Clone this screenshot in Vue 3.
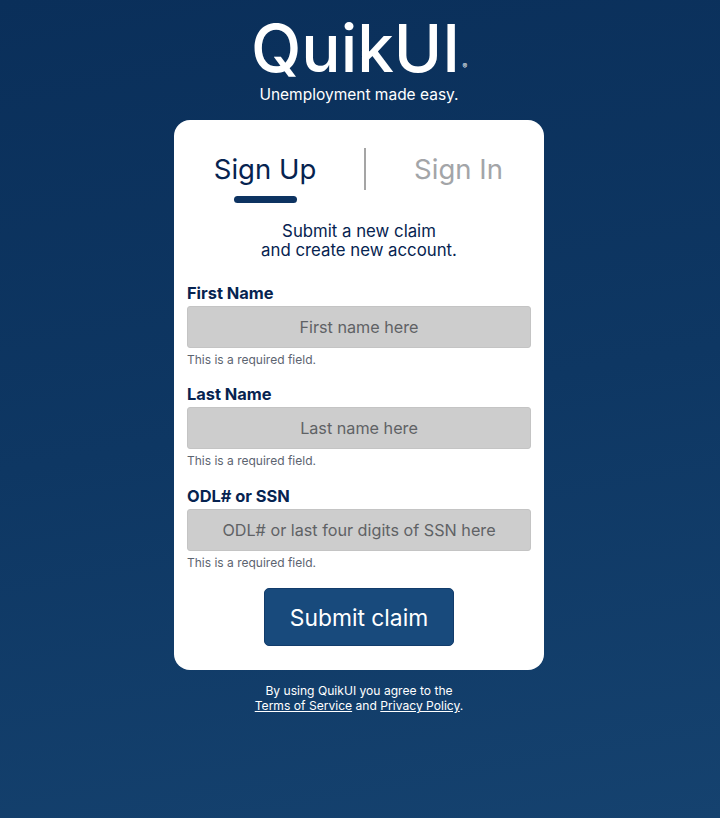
<template>
  <div class="page">
    <header class="brand">
      <div class="logo">QuikUI<span class="reg">®</span></div>
      <div class="tagline">Unemployment made easy.</div>
    </header>

    <main class="card">
      <div class="tabs">
        <div class="tab active">Sign Up</div>
        <div class="divider"></div>
        <div class="tab">Sign In</div>
      </div>
      <p class="intro">Submit a new claim<br />and create new account.</p>

      <form class="form" @submit.prevent>
        <div v-for="f in fields" :key="f.label" class="field">
          <label>{{ f.label }}</label>
          <input type="text" :placeholder="f.placeholder" />
          <small>This is a required field.</small>
        </div>
        <button type="submit" class="submit">Submit claim</button>
      </form>
    </main>

    <footer class="legal">
      By using QuikUI you agree to the<br />
      <a href="#">Terms of Service</a> and <a href="#">Privacy Policy</a>.
    </footer>
  </div>
</template>

<script setup>
const fields = [
  { label: 'First Name', placeholder: 'First name here' },
  { label: 'Last Name', placeholder: 'Last name here' },
  { label: 'ODL# or SSN', placeholder: 'ODL# or last four digits of SSN here' }
]
</script>

<style>
html, body { margin: 0; }
</style>

<style scoped>
.page {
  box-sizing: border-box;
  height: 818px;
  padding-right: 2px;
  display: flex;
  flex-direction: column;
  align-items: center;
  background: linear-gradient(170deg, #0a2f5a 0%, #0e3763 50%, #15426f 100%);
  font-family: Inter, "Open Sans", sans-serif;
  color: #062350;
  overflow: hidden;
}

.brand { text-align: center; color: #fff; height: 120px; }
.logo {
  position: relative;
  margin-top: 14px;
  padding-right: 7px;
  font-size: 65.5px;
  line-height: 70px;
  font-weight: 500;
}
.reg {
  position: absolute;
  right: 0;
  bottom: 13px;
  font-size: 7px;
  line-height: 8px;
  font-weight: 400;
}
.tagline { margin-top: 2px; font-size: 15.5px; line-height: 18px; }

.card {
  box-sizing: border-box;
  width: 370px;
  height: 550px;
  padding: 28px 13px 0;
  background: #fff;
  border-radius: 16px;
}

.tabs { display: flex; align-items: flex-start; height: 74px; }
.tab {
  position: relative;
  flex: 1;
  text-align: center;
  font-size: 27.5px;
  line-height: 42px;
  color: #a3a5a8;
}
.tab.active {
  flex: 0 0 156px;
  margin-right: 21px;
  color: #062350;
}
.tab.active::after {
  content: '';
  position: absolute;
  left: 50%;
  top: 48px;
  width: 63px;
  height: 7px;
  margin-left: -31.5px;
  border-radius: 4px;
  background: #0d3361;
}
.divider { width: 2px; height: 42px; margin-right: 20px; background: #a5a5a5; }

.intro {
  margin: 0 0 21px;
  font-size: 16.8px;
  line-height: 19px;
  text-align: center;
}

.field { display: flex; flex-direction: column; margin-bottom: 13px; }
.field:nth-child(2) { margin-bottom: 14px; }
.field label {
  font-size: 16.4px;
  line-height: 24px;
  font-weight: 700;
  margin-bottom: 1px;
}
.field input {
  box-sizing: border-box;
  height: 42px;
  border: 1px solid #c4c4c4;
  border-radius: 3px;
  background: #cdcdcd;
  text-align: center;
  font-family: inherit;
  font-size: 16.2px;
}
.field input::placeholder { color: #5f6265; opacity: 1; }
.field small {
  margin-top: 3px;
  font-size: 12px;
  line-height: 18px;
  color: #5c6470;
}

.submit {
  display: block;
  box-sizing: border-box;
  width: 190px;
  height: 58px;
  margin: 16px auto 0;
  border: 1px solid #123c6b;
  border-radius: 5px;
  background: #184a7c;
  color: #fff;
  font-family: inherit;
  font-size: 22.8px;
}

.legal {
  margin-top: 13px;
  text-align: center;
  color: #fff;
  font-size: 12.1px;
  line-height: 15px;
}
.legal a { color: #fff; text-decoration: underline; }
</style>
